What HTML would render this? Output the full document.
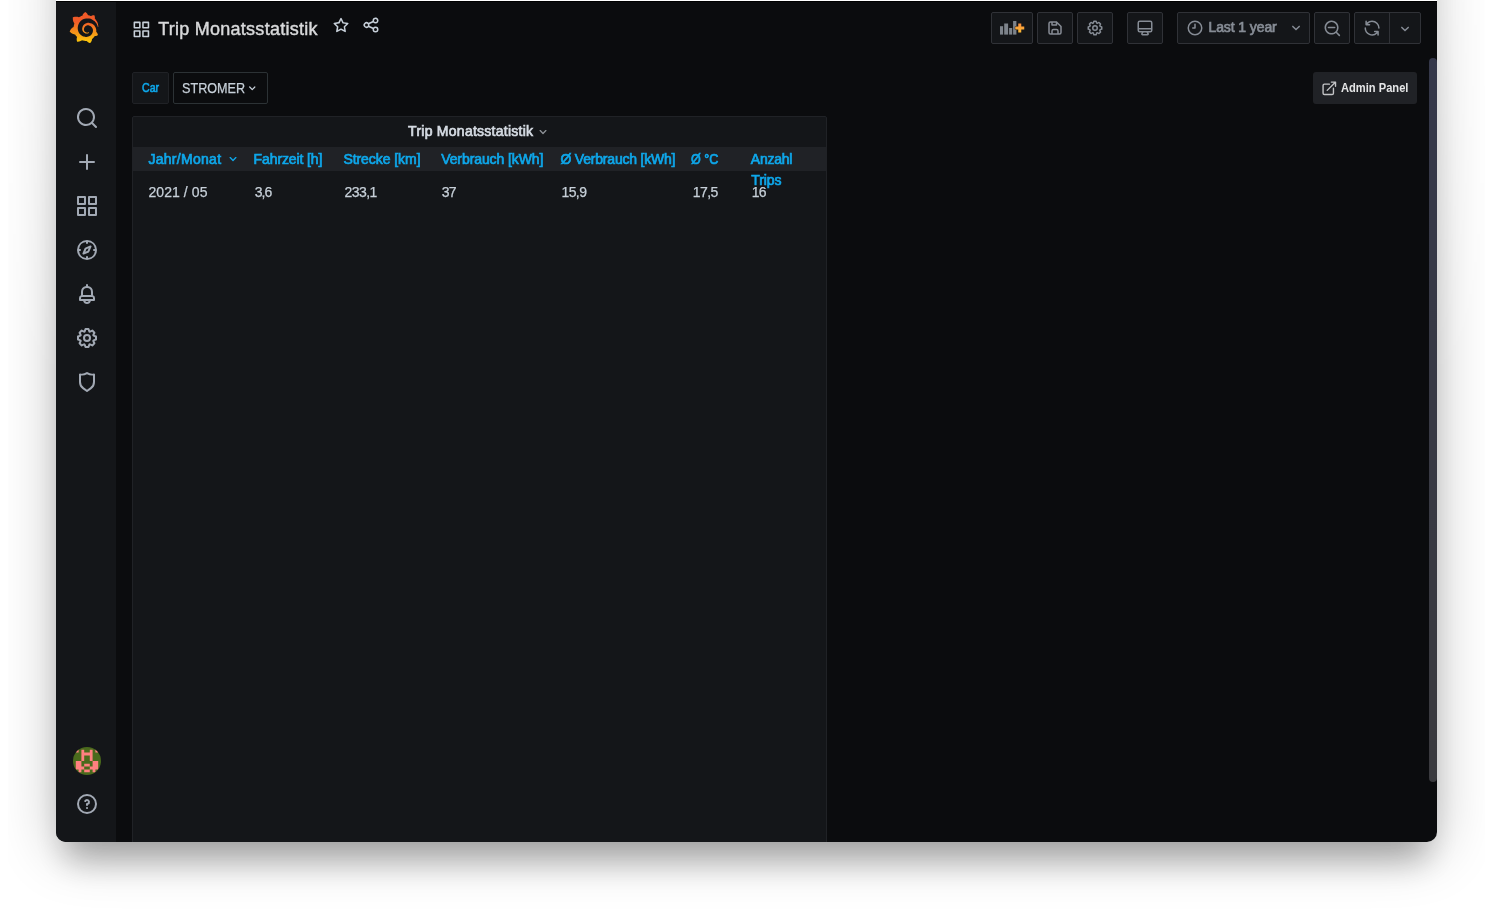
<!DOCTYPE html>
<html lang="en">
<head>
<meta charset="utf-8">
<title>Trip Monatsstatistik - Grafana</title>
<style>
*{box-sizing:border-box;margin:0;padding:0}
html,body{width:1492px;height:914px;overflow:hidden;background:#fff}
body{font-family:"Liberation Sans",sans-serif;position:relative;color:#c7d0d9}
.abs{position:absolute}
.shclip{position:absolute;left:8px;top:0;width:1477px;height:914px;overflow:hidden;-webkit-mask-image:linear-gradient(to bottom,rgba(0,0,0,.68) 0,#000 380px);mask-image:linear-gradient(to bottom,rgba(0,0,0,.68) 0,#000 380px)}
.shadow{position:absolute;left:48px;top:-120px;width:1381px;height:962px;border-radius:0 0 10px 10px;
  box-shadow:0 28px 30px -10px rgba(0,0,0,.25),0 8px 58px rgba(0,0,0,.245)}
.topstrip{position:absolute;left:56px;top:0;width:1381px;height:1px;background:#fff}
.win{position:absolute;left:56px;top:1px;width:1381px;height:841px;background:#0b0c0e;border-radius:0 0 10px 10px;overflow:hidden}
.win .topline{position:absolute;left:0;top:0;width:100%;height:1px;background:#000;z-index:9}
.side{position:absolute;left:0;top:0;width:60px;height:100%;background:#141619}
.side svg.ic{position:absolute;left:19px;width:24px;height:24px;fill:#a2a9b4}
.t{position:absolute;white-space:nowrap;line-height:1}
#main{position:absolute;left:0;top:0;width:100%;height:100%;will-change:transform}
</style>
</head>
<body>
<div class="shclip"><div class="shadow"></div></div>
<div class="topstrip"></div>
<div class="win">
  <div class="topline"></div>
  <div class="side" id="side">
    <svg class="abs" style="left:13px;top:10px;width:30px;height:33px" viewBox="0 0 351 365"><defs><linearGradient id="gl" gradientUnits="userSpaceOnUse" x1="175.5" y1="445.4948" x2="175.5" y2="114.0346"><stop offset="0" stop-color="#FFF100"/><stop offset="1" stop-color="#F05A28"/></linearGradient></defs><path fill="url(#gl)" d="M342,161.2c-0.600-6.100-1.600-13.100-3.600-20.900c-2-7.700-5-16.200-9.400-25c-4.400-8.800-10.100-17.900-17.500-26.800 c-2.900-3.500-6.100-6.900-9.500-10.200c5.100-20.300-6.200-37.900-6.200-37.900c-19.500-1.200-31.900,6.100-36.500,9.400c-0.800-0.300-1.500-0.700-2.300-1 c-3.300-1.300-6.700-2.600-10.300-3.700c-3.500-1.100-7.100-2.100-10.800-3c-3.700-0.900-7.400-1.600-11.200-2.200c-0.700-0.100-1.300-0.200-2-0.300 c-8.500-27.200-32.900-38.600-32.900-38.600c-27.300,17.300-32.400,41.500-32.400,41.500s-0.100,0.500-0.300,1.400c-1.500,0.400-3,0.900-4.500,1.300c-2.100,0.600-4.200,1.400-6.200,2.200 c-2.100,0.800-4.100,1.600-6.200,2.500c-4.100,1.800-8.200,3.800-12.200,6c-3.900,2.200-7.700,4.600-11.400,7.100c-0.500-0.200-1-0.400-1-0.400c-37.800-14.400-71.300,2.900-71.300,2.900 c-3.100,40.200,15.100,65.500,18.700,70.100c-0.900,2.500-1.700,5-2.500,7.500c-2.800,9.100-4.900,18.400-6.200,28.100c-0.200,1.400-0.400,2.800-0.500,4.200 C18.800,192.700,8.500,228,8.500,228c29.100,33.500,63.100,35.600,63.100,35.600c0,0,0.100-0.100,0.100-0.100c4.300,7.700,9.300,15,14.900,21.900c2.400,2.900,4.800,5.600,7.400,8.300 c-10.600,30.400,1.500,55.600,1.500,55.600c32.400,1.200,53.700-14.200,58.200-17.700c3.200,1.100,6.500,2.100,9.800,2.900c10,2.600,20.200,4.100,30.400,4.500 c2.500,0.100,5.100,0.200,7.600,0.100l1.200,0l0.800,0l1.600,0l1.600-0.100l0,0.100c15.300,21.800,42.100,24.900,42.100,24.900c19.100-20.100,20.200-40.100,20.200-44.400l0,0 c0,0,0-0.100,0-0.300c0-0.400,0-0.600,0-0.600l0,0c0-0.300,0-0.600,0-0.900c4-2.800,7.800-5.800,11.400-9.100c7.600-6.900,14.300-14.800,19.900-23.300 c0.500-0.800,1-1.600,1.500-2.400c21.600,1.200,36.900-13.400,36.900-13.400c-3.600-22.500-16.400-33.500-19.100-35.600l0,0c0,0-0.100-0.100-0.300-0.200 c-0.200-0.100-0.200-0.200-0.200-0.200c0,0,0,0,0,0c-0.100-0.100-0.300-0.200-0.500-0.300c0.100-1.400,0.200-2.700,0.300-4.100c0.200-2.400,0.200-4.900,0.200-7.300l0-1.800l0-0.900 l0-0.500c0-0.600,0-0.400,0-0.600l-0.100-1.500l-0.100-2c0-0.700-0.100-1.300-0.200-1.900c-0.100-0.600-0.100-1.300-0.200-1.900l-0.200-1.900l-0.300-1.900 c-0.400-2.500-0.800-4.900-1.400-7.400c-2.300-9.700-6.100-18.900-11-27.200c-5-8.300-11.200-15.600-18.300-21.800c-7-6.200-14.900-11.200-23.100-14.900 c-8.300-3.700-16.900-6.100-25.500-7.200c-4.300-0.600-8.600-0.800-12.900-0.700l-1.600,0l-0.400,0c-0.100,0-0.600,0-0.500,0l-0.700,0l-1.600,0.100 c-0.600,0-1.200,0.100-1.700,0.100c-2.200,0.200-4.400,0.500-6.500,0.900c-8.600,1.600-16.700,4.700-23.800,9c-7.100,4.300-13.300,9.600-18.300,15.600c-5,6-8.900,12.700-11.600,19.600 c-2.700,6.900-4.200,14.100-4.600,21c-0.100,1.700-0.100,3.500-0.100,5.200c0,0.400,0,0.900,0,1.300l0.100,1.400c0.100,0.800,0.100,1.700,0.200,2.500c0.300,3.500,1,6.900,1.900,10.100 c1.900,6.500,4.900,12.400,8.600,17.400c3.700,5,8.200,9.100,12.900,12.400c4.700,3.200,9.800,5.500,14.800,7c5,1.500,10,2.100,14.700,2.100c0.600,0,1.200,0,1.700,0 c0.300,0,0.600,0,0.900,0c0.300,0,0.600,0,0.900-0.100c0.500,0,1-0.100,1.500-0.100c0.100,0,0.300,0,0.400-0.100l0.500-0.100c0.300,0,0.600-0.100,0.900-0.100 c0.600-0.100,1.100-0.200,1.700-0.300c0.600-0.100,1.100-0.200,1.600-0.400c1.100-0.200,2.100-0.600,3.100-0.900c2-0.700,4-1.500,5.700-2.400c1.800-0.900,3.400-2,5-3 c0.400-0.300,0.900-0.600,1.300-1c1.600-1.300,1.900-3.700,0.600-5.300c-1.100-1.400-3.100-1.800-4.700-0.900c-0.400,0.200-0.800,0.400-1.200,0.600c-1.400,0.700-2.800,1.300-4.300,1.800 c-1.500,0.500-3.100,0.900-4.700,1.200c-0.800,0.100-1.600,0.200-2.500,0.300c-0.400,0-0.800,0.100-1.300,0.100c-0.400,0-0.900,0-1.200,0c-0.400,0-0.800,0-1.200,0 c-0.500,0-1,0-1.500-0.100c0,0-0.300,0-0.100,0l-0.200,0l-0.300,0c-0.200,0-0.500,0-0.700-0.100c-0.500-0.100-0.900-0.100-1.400-0.200c-3.700-0.500-7.400-1.600-10.900-3.200 c-3.600-1.600-7-3.800-10.100-6.600c-3.100-2.800-5.800-6.100-7.900-9.900c-2.100-3.800-3.600-8-4.300-12.400c-0.300-2.200-0.500-4.500-0.400-6.700c0-0.600,0.100-1.200,0.100-1.800 c0,0.200,0-0.100,0-0.100l0-0.200l0-0.500c0-0.300,0.100-0.600,0.100-0.900c0.100-1.200,0.300-2.400,0.500-3.600c1.700-9.600,6.500-19,13.900-26.100c1.900-1.800,3.900-3.400,6-4.900 c2.100-1.500,4.400-2.800,6.800-3.900c2.400-1.100,4.800-2,7.400-2.700c2.500-0.700,5.100-1.100,7.800-1.400c1.300-0.100,2.600-0.200,4-0.200c0.400,0,0.600,0,0.900,0l1.100,0l0.700,0 c0.300,0,0,0,0.100,0l0.300,0l1.100,0.100c2.900,0.200,5.700,0.600,8.500,1.300c5.600,1.200,11.100,3.300,16.200,6.100c10.200,5.700,18.900,14.500,24.200,25.100 c2.700,5.300,4.600,11,5.500,16.900c0.200,1.500,0.400,3,0.500,4.500l0.100,1.100l0.100,1.100c0,0.400,0,0.800,0,1.100c0,0.400,0,0.800,0,1.100l0,1l0,1.100 c0,0.700-0.100,1.900-0.100,2.600c-0.100,1.600-0.300,3.300-0.500,4.900c-0.200,1.600-0.500,3.200-0.800,4.800c-0.300,1.600-0.700,3.200-1.100,4.700c-0.800,3.100-1.800,6.200-3,9.300 c-2.400,6-5.600,11.800-9.400,17.100c-7.700,10.600-18.200,19.200-30.200,24.700c-6,2.700-12.300,4.700-18.800,5.700c-3.200,0.600-6.500,0.900-9.800,1l-0.600,0l-0.500,0l-1.100,0 l-1.600,0l-0.800,0c0.400,0-0.100,0-0.100,0l-0.300,0c-1.800,0-3.500-0.100-5.300-0.300c-7-0.500-13.900-1.800-20.700-3.700c-6.700-1.900-13.200-4.600-19.400-7.800 c-12.300-6.600-23.400-15.600-32-26.500c-4.300-5.400-8.100-11.300-11.200-17.400c-3.100-6.100-5.600-12.600-7.400-19.100c-1.800-6.600-2.900-13.300-3.400-20.100l-0.100-1.300l0-0.300 l0-0.300l0-0.600l0-1.100l0-0.300l0-0.400l0-0.800l0-1.600l0-0.300c0,0,0,0.100,0-0.100l0-0.600c0-0.800,0-1.700,0-2.500c0.100-3.300,0.400-6.800,0.800-10.200 c0.400-3.400,1-6.900,1.700-10.300c0.700-3.400,1.500-6.800,2.500-10.200c1.900-6.700,4.300-13.200,7.100-19.300c5.700-12.200,13.100-23.100,22-31.800c2.200-2.200,4.500-4.200,6.900-6.200 c2.400-1.900,4.900-3.700,7.500-5.400c2.500-1.700,5.200-3.200,7.900-4.600c1.300-0.700,2.700-1.400,4.100-2c0.700-0.300,1.400-0.600,2.100-0.900c0.700-0.300,1.400-0.600,2.100-0.900 c2.800-1.200,5.700-2.200,8.700-3.100c0.700-0.200,1.500-0.400,2.200-0.700c0.700-0.200,1.500-0.400,2.200-0.600c1.500-0.400,3-0.800,4.500-1.100c0.700-0.200,1.500-0.300,2.300-0.500 c0.800-0.200,1.500-0.300,2.300-0.500c0.800-0.100,1.500-0.300,2.300-0.400l1.100-0.200l1.200-0.200c0.800-0.100,1.500-0.200,2.300-0.300c0.900-0.100,1.700-0.200,2.600-0.300 c0.700-0.100,1.900-0.200,2.600-0.300c0.500-0.100,1.100-0.100,1.600-0.200l1.100-0.100l0.500-0.100l0.600,0c0.900-0.100,1.700-0.100,2.600-0.200l1.300-0.100c0,0,0.500,0,0.100,0l0.300,0 l0.600,0c0.700,0,1.500-0.100,2.200-0.100c2.900-0.100,5.900-0.100,8.800,0c5.800,0.200,11.500,0.900,17,1.900c11.100,2.100,21.500,5.600,31,10.300 c9.500,4.600,17.900,10.300,25.300,16.500c0.500,0.400,0.900,0.800,1.400,1.200c0.400,0.400,0.900,0.800,1.300,1.200c0.900,0.800,1.700,1.600,2.600,2.400c0.900,0.800,1.700,1.600,2.500,2.400 c0.800,0.800,1.600,1.600,2.400,2.500c3.100,3.300,6,6.600,8.600,10c5.200,6.700,9.400,13.500,12.700,19.900c0.200,0.400,0.400,0.800,0.600,1.200c0.200,0.400,0.400,0.800,0.600,1.200 c0.400,0.800,0.800,1.600,1.100,2.400c0.400,0.800,0.700,1.500,1.100,2.300c0.300,0.800,0.700,1.500,1,2.300c1.200,3,2.400,5.900,3.300,8.600c1.500,4.400,2.600,8.300,3.500,11.700 c0.300,1.400,1.600,2.300,3,2.100c1.500-0.100,2.600-1.300,2.600-2.800C342.600,170.400,342.500,166.100,342,161.200z"/></svg>
    <svg class="ic" style="top:105px" viewBox="0 0 24 24"><path d="M21.71,20.29,18,16.61A9,9,0,1,0,16.61,18l3.68,3.68a1,1,0,0,0,1.420,0A1,1,0,0,0,21.71,20.29ZM11,18a7,7,0,1,1,7-7A7,7,0,0,1,11,18Z"/></svg>
    <svg class="ic" style="top:149px" viewBox="0 0 24 24"><path d="M19,11H13V5a1,1,0,0,0-2,0v6H5a1,1,0,0,0,0,2h6v6a1,1,0,0,0,2,0V13h6a1,1,0,0,0,0-2Z"/></svg>
    <svg class="ic" style="top:193px" viewBox="0 0 24 24"><path d="M10,13H3a1,1,0,0,0-1,1v7a1,1,0,0,0,1,1h7a1,1,0,0,0,1-1V14A1,1,0,0,0,10,13ZM9,20H4V15H9ZM21,2H14a1,1,0,0,0-1,1v7a1,1,0,0,0,1,1h7a1,1,0,0,0,1-1V3A1,1,0,0,0,21,2ZM20,9H15V4h5Zm1,4H14a1,1,0,0,0-1,1v7a1,1,0,0,0,1,1h7a1,1,0,0,0,1-1V14A1,1,0,0,0,21,13Zm-1,7H15V15h5ZM10,2H3A1,1,0,0,0,2,3v7a1,1,0,0,0,1,1h7a1,1,0,0,0,1-1V3A1,1,0,0,0,10,2ZM9,9H4V4H9Z"/></svg>
    <svg class="ic" style="top:237px" viewBox="0 0 24 24"><path d="M12,2A10,10,0,1,0,22,12,10,10,0,0,0,12,2Zm1,17.930V19a1,1,0,0,0-2,0v.93A8,8,0,0,1,4.070,13H5a1,1,0,0,0,0-2H4.070A8,8,0,0,1,11,4.070V5a1,1,0,0,0,2,0V4.070A8,8,0,0,1,19.930,11H19a1,1,0,0,0,0,2h.93A8,8,0,0,1,13,19.930ZM15.140,7.550l-5,2.120a1,1,0,0,0-.520.520l-2.120,5a1,1,0,0,0,.21,1.100,1,1,0,0,0,.7.300.930.930,0,0,0,.4-.09l5-2.120a1,1,0,0,0,.52-.52l2.120-5a1,1,0,0,0-1.310-1.310Zm-2.490,5.100-2.280,1,1-2.280,2.280-1Z"/></svg>
    <svg class="ic" style="top:281px" viewBox="0 0 24 24"><path d="M18,13.180V10a6,6,0,0,0-5-5.910V3a1,1,0,0,0-2,0V4.090A6,6,0,0,0,6,10v3.180A3,3,0,0,0,4,16v2a1,1,0,0,0,1,1H8.140a4,4,0,0,0,7.720,0H19a1,1,0,0,0,1-1V16A3,3,0,0,0,18,13.180ZM8,10a4,4,0,0,1,8,0v3H8Zm4,10a2,2,0,0,1-1.720-1h3.440A2,2,0,0,1,12,20Zm6-3H6V16a1,1,0,0,1,1-1H17a1,1,0,0,1,1,1Z"/></svg>
    <svg class="ic" style="top:325px" viewBox="0 0 24 24"><path d="M21.320,9.550l-1.890-.63.890-1.780A1,1,0,0,0,20.130,6L18,3.870a1,1,0,0,0-1.150-.19l-1.780.89-.63-1.890A1,1,0,0,0,13.500,2h-3a1,1,0,0,0-.95.680L8.920,4.570,7.140,3.680A1,1,0,0,0,6,3.870L3.870,6a1,1,0,0,0-.19,1.150l.89,1.780-1.890.63A1,1,0,0,0,2,10.500v3a1,1,0,0,0,.68.950l1.890.63-.89,1.780A1,1,0,0,0,3.870,18L6,20.130a1,1,0,0,0,1.150.19l1.780-.89.630,1.890a1,1,0,0,0,.95.680h3a1,1,0,0,0,.95-.68l.63-1.890,1.780.89A1,1,0,0,0,18,20.130L20.130,18a1,1,0,0,0,.19-1.150l-.89-1.780,1.890-.63A1,1,0,0,0,22,13.500v-3A1,1,0,0,0,21.320,9.550ZM20,12.780l-1.200.4A2,2,0,0,0,17.640,16l.57,1.140-1.100,1.100L16,17.640a2,2,0,0,0-2.790,1.160l-.4,1.200H11.220l-.4-1.200A2,2,0,0,0,8,17.640l-1.140.57-1.100-1.100L6.360,16A2,2,0,0,0,5.200,13.180L4,12.780V11.220l1.200-.4A2,2,0,0,0,6.360,8L5.790,6.890l1.100-1.100L8,6.360A2,2,0,0,0,10.820,5.200l.4-1.200h1.560l.4,1.200A2,2,0,0,0,16,6.360l1.140-.57,1.100,1.100L17.640,8a2,2,0,0,0,1.160,2.790l1.200.4ZM12,8a4,4,0,1,0,4,4A4,4,0,0,0,12,8Zm0,6a2,2,0,1,1,2-2A2,2,0,0,1,12,14Z"/></svg>
    <svg class="ic" style="top:369px" viewBox="0 0 24 24"><path d="M19.630,3.650a1,1,0,0,0-.84-.2,8,8,0,0,1-6.220-1.270,1,1,0,0,0-1.140,0A8,8,0,0,1,5.210,3.450a1,1,0,0,0-.84.2A1,1,0,0,0,4,4.430v7.450a9,9,0,0,0,3.770,7.330l3.650,2.600a1,1,0,0,0,1.160,0l3.650-2.600A9,9,0,0,0,20,11.880V4.430A1,1,0,0,0,19.630,3.650ZM18,11.880a7,7,0,0,1-2.930,5.700L12,19.770,8.930,17.580A7,7,0,0,1,6,11.880V5.580a10,10,0,0,0,6-1.390,10,10,0,0,0,6,1.390Z"/></svg>
    <svg class="abs" style="left:17px;top:746px;width:28px;height:28px" viewBox="0 0 10 10"><defs><clipPath id="av"><circle cx="5" cy="5" r="5"/></clipPath></defs><g clip-path="url(#av)"><rect width="10" height="10" fill="#4a6a1c"/><path fill="#ff8080" d="M1,1h1v1h-1zM3,1h1v1h-1zM6,1h1v1h-1zM8,1h1v1h-1zM3,2h4v1h-4zM3,3h1v2h-1zM6,3h1v2h-1zM1,5h2v2h-2zM7,5h2v2h-2zM4,6h2v1h-2zM1,7h3v1h-3zM6,7h3v1h-3zM2,8h1v1h-1zM4,8h2v1h-2zM7,8h1v1h-1z"/></g></svg>
    <svg class="ic" style="top:791px" viewBox="0 0 24 24"><path d="M11.290,15.290a1.580,1.580,0,0,0-.12.150.76.76,0,0,0-.09.180.64.640,0,0,0-.06.180,1.360,1.360,0,0,0,0,.2.840.84,0,0,0,.08.380.9.900,0,0,0,.54.540.94.940,0,0,0,.76,0,.9.900,0,0,0,.54-.54A1,1,0,0,0,13,16a1,1,0,0,0-.29-.71A1,1,0,0,0,11.290,15.290ZM12,2A10,10,0,1,0,22,12,10,10,0,0,0,12,2Zm0,18a8,8,0,1,1,8-8A8,8,0,0,1,12,20ZM12,7A3,3,0,0,0,9.400,8.500a1,1,0,1,0,1.730,1A1,1,0,0,1,12,9a1,1,0,0,1,0,2,1,1,0,0,0-1,1v1a1,1,0,0,0,2,0v-.18A3,3,0,0,0,12,7Z"/></svg>
  </div>
  <div id="main">
<svg class="abs" style="left:75.90px;top:18.60px;width:18.8px;height:18.8px;fill:#c7d0d9" viewBox="0 0 24 24"><path d="M10,13H3a1,1,0,0,0-1,1v7a1,1,0,0,0,1,1h7a1,1,0,0,0,1-1V14A1,1,0,0,0,10,13ZM9,20H4V15H9ZM21,2H14a1,1,0,0,0-1,1v7a1,1,0,0,0,1,1h7a1,1,0,0,0,1-1V3A1,1,0,0,0,21,2ZM20,9H15V4h5Zm1,4H14a1,1,0,0,0-1,1v7a1,1,0,0,0,1,1h7a1,1,0,0,0,1-1V14A1,1,0,0,0,21,13Zm-1,7H15V15h5ZM10,2H3A1,1,0,0,0,2,3v7a1,1,0,0,0,1,1h7a1,1,0,0,0,1-1V3A1,1,0,0,0,10,2ZM9,9H4V4H9Z"/></svg>
<span class="t" style="top:18.56px;font-size:18px;color:#d8d9da;left:102.20px;letter-spacing:0.257px;-webkit-text-stroke:0.45px #d8d9da;">Trip Monatsstatistik</span>
<svg class="abs" style="left:275.60px;top:15.00px;width:18px;height:18px;fill:#c7d0d9" viewBox="0 0 24 24"><path d="M22,9.67A1,1,0,0,0,21.14,9l-5.69-.83L12.9,3a1,1,0,0,0-1.8,0L8.55,8.16,2.86,9a1,1,0,0,0-.81.68,1,1,0,0,0,.25,1l4.13,4-1,5.68A1,1,0,0,0,6.900,21.440L12,18.770l5.100,2.670a.93.93,0,0,0,.46.120,1,1,0,0,0,.59-.19,1,1,0,0,0,.4-1l-1-5.68,4.130-4A1,1,0,0,0,22,9.670Zm-6.150,4a1,1,0,0,0-.29.880l.72,4.200-3.760-2a1.060,1.060,0,0,0-.94,0l-3.760,2,.72-4.200a1,1,0,0,0-.29-.88l-3-3,4.210-.61a1,1,0,0,0,.76-.55L12,5.700l1.880,3.820a1,1,0,0,0,.76.550l4.210.61Z"/></svg>
<svg class="abs" style="left:306.30px;top:15.00px;width:18px;height:18px;fill:#c7d0d9" viewBox="0 0 24 24"><path d="M18,14a4,4,0,0,0-3.080,1.480l-5.100-2.350a3.640,3.640,0,0,0,0-2.260l5.100-2.350A4,4,0,1,0,14,6a4.170,4.170,0,0,0,.07.710L8.790,9.140a4,4,0,1,0,0,5.720l5.280,2.430A4.170,4.170,0,0,0,14,18a4,4,0,1,0,4-4ZM18,4a2,2,0,1,1-2,2A2,2,0,0,1,18,4ZM6,14a2,2,0,1,1,2-2A2,2,0,0,1,6,14Zm12,6a2,2,0,1,1,2-2A2,2,0,0,1,18,20Z"/></svg>
<div class="abs" style="left:935px;top:11px;width:42px;height:32px;background:#141619;border:1px solid #303237;border-radius:2px;"></div>
<svg class="abs" style="left:943.9px;top:20.0px;width:25px;height:14px" viewBox="0 0 25 14"><defs><linearGradient id="pg" x1="0" y1="0" x2="0" y2="1"><stop offset="0" stop-color="#f78d3d"/><stop offset="1" stop-color="#fcbb32"/></linearGradient></defs><g fill="#7d838b"><rect x="0" y="5.2" width="3.1" height="8.4"/><rect x="4.2" y="2.5" width="3.9" height="11.100"/><rect x="9.1" y="7" width="3.1" height="6.6"/><rect x="13.1" y="0" width="3.3" height="13.6"/></g><path fill="url(#pg)" d="M18.25,2.5h3v3h3v3h-3v3h-3v-3h-3v-3h3z" stroke="#141619" stroke-width="1" paint-order="stroke"/></svg>
<div class="abs" style="left:981px;top:11px;width:36px;height:32px;background:#141619;border:1px solid #303237;border-radius:2px;"></div>
<svg class="abs" style="left:990.20px;top:18.00px;width:18px;height:18px;fill:#868c95" viewBox="0 0 24 24"><path d="M20.71,9.29l-6-6a1,1,0,0,0-.32-.21A1.090,1.090,0,0,0,14,3H6A3,3,0,0,0,3,6V18a3,3,0,0,0,3,3H18a3,3,0,0,0,3-3V10A1,1,0,0,0,20.710,9.290ZM9,5h4V7H9Zm6,14H9V16a1,1,0,0,1,1-1h4a1,1,0,0,1,1,1Zm4-1a1,1,0,0,1-1,1H17V16a3,3,0,0,0-3-3H10a3,3,0,0,0-3,3v3H6a1,1,0,0,1-1-1V6A1,1,0,0,1,6,5H7V8A1,1,0,0,0,8,9h6a1,1,0,0,0,1-1V6.410l4,4Z"/></svg>
<div class="abs" style="left:1021px;top:11px;width:36px;height:32px;background:#141619;border:1px solid #303237;border-radius:2px;"></div>
<svg class="abs" style="left:1030.00px;top:18.00px;width:18px;height:18px;fill:#868c95" viewBox="0 0 24 24"><path d="M21.320,9.550l-1.890-.63.890-1.780A1,1,0,0,0,20.130,6L18,3.870a1,1,0,0,0-1.150-.19l-1.780.89-.63-1.890A1,1,0,0,0,13.500,2h-3a1,1,0,0,0-.95.68L8.920,4.570,7.140,3.680A1,1,0,0,0,6,3.870L3.870,6a1,1,0,0,0-.19,1.150l.89,1.780-1.890.63A1,1,0,0,0,2,10.500v3a1,1,0,0,0,.68.950l1.890.63-.89,1.780A1,1,0,0,0,3.870,18L6,20.130a1,1,0,0,0,1.150.19l1.780-.89.630,1.890a1,1,0,0,0,.95.680h3a1,1,0,0,0,.95-.68l.63-1.890,1.780.89A1,1,0,0,0,18,20.130L20.130,18a1,1,0,0,0,.19-1.150l-.89-1.780,1.890-.63A1,1,0,0,0,22,13.500v-3A1,1,0,0,0,21.320,9.550ZM20,12.780l-1.200.4A2,2,0,0,0,17.640,16l.57,1.140-1.100,1.100L16,17.640a2,2,0,0,0-2.790,1.160l-.4,1.200H11.220l-.4-1.200A2,2,0,0,0,8,17.640l-1.140.57-1.100-1.100L6.360,16A2,2,0,0,0,5.200,13.180L4,12.780V11.220l1.200-.4A2,2,0,0,0,6.360,8L5.790,6.890l1.100-1.100L8,6.360A2,2,0,0,0,10.820,5.200l.4-1.200h1.560l.4,1.200A2,2,0,0,0,16,6.360l1.140-.57,1.100,1.100L17.640,8a2,2,0,0,0,1.160,2.790l1.200.4ZM12,8a4,4,0,1,0,4,4A4,4,0,0,0,12,8Zm0,6a2,2,0,1,1,2-2A2,2,0,0,1,12,14Z"/></svg>
<div class="abs" style="left:1071px;top:11px;width:36px;height:32px;background:#141619;border:1px solid #303237;border-radius:2px;"></div>
<svg class="abs" style="left:1080.00px;top:17.80px;width:18px;height:18px;fill:#868c95" viewBox="0 0 24 24"><path d="M19,2H5A3,3,0,0,0,2,5V15a3,3,0,0,0,3,3H7.640l-.58,1a2,2,0,0,0,0,2,2,2,0,0,0,1.750,1h6.460A2,2,0,0,0,17,21a2,2,0,0,0,0-2l-.59-1H19a3,3,0,0,0,3-3V5A3,3,0,0,0,19,2ZM8.770,20,10,18H14l1.200,2ZM20,15a1,1,0,0,1-1,1H5a1,1,0,0,1-1-1V14H20Zm0-3H4V5A1,1,0,0,1,5,4H19a1,1,0,0,1,1,1Z"/></svg>
<div class="abs" style="left:1121px;top:11px;width:133px;height:32px;background:#141619;border:1px solid #303237;border-radius:2px;"></div>
<svg class="abs" style="left:1130.40px;top:17.60px;width:18px;height:18px;fill:#868c95" viewBox="0 0 24 24"><path d="M12,2A10,10,0,1,0,22,12,10.010,10.010,0,0,0,12,2Zm0,18a8,8,0,1,1,8-8A8.009,8.009,0,0,1,12,20ZM12,6a1,1,0,0,0-1,1v4H9a1,1,0,0,0,0,2h3a1,1,0,0,0,1-1V7A1,1,0,0,0,12,6Z"/></svg>
<span class="t" style="top:19.25px;font-size:14px;color:#868c95;left:1152.50px;letter-spacing:-0.100px;-webkit-text-stroke:0.7px #868c95;">Last 1 year</span>
<svg class="abs" style="left:1231.00px;top:18.10px;width:18px;height:18px;fill:#868c95" viewBox="0 0 24 24"><path d="M17,9.17a1,1,0,0,0-1.410,0L12,12.710,8.460,9.170a1,1,0,0,0-1.410,0,1,1,0,0,0,0,1.420l4.240,4.240a1,1,0,0,0,1.420,0L17,10.590A1,1,0,0,0,17,9.170Z"/></svg>
<div class="abs" style="left:1258px;top:11px;width:36px;height:32px;background:#141619;border:1px solid #303237;border-radius:2px;"></div>
<svg class="abs" style="left:1267.05px;top:17.75px;width:18.7px;height:18.7px;fill:#868c95" viewBox="0 0 24 24"><path d="M21.71,20.29,18,16.61A9,9,0,1,0,16.610,18l3.680,3.680a1,1,0,0,0,1.420,0A1,1,0,0,0,21.710,20.290ZM11,18a7,7,0,1,1,7-7A7,7,0,0,1,11,18ZM15,10H7a1,1,0,0,0,0,2h8a1,1,0,0,0,0-2Z"/></svg>
<div class="abs" style="left:1298px;top:11px;width:67px;height:32px;background:#141619;border:1px solid #303237;border-radius:2px;"></div>
<svg class="abs" style="left:1306.90px;top:17.70px;width:18.2px;height:18.2px;fill:#868c95" viewBox="0 0 24 24"><path d="M19.91,15.51H15.38a1,1,0,0,0,0,2h2.4A8,8,0,0,1,4,12a1,1,0,0,0-2,0,10,10,0,0,0,16.88,7.23V21a1,1,0,0,0,2,0V16.5A1,1,0,0,0,19.91,15.51ZM12,2A10,10,0,0,0,5.12,4.77V3a1,1,0,0,0-2,0V7.5a1,1,0,0,0,1,1h4.5a1,1,0,0,0,0-2H6.22A8,8,0,0,1,20,12a1,1,0,0,0,2,0A10,10,0,0,0,12,2Z"/></svg>
<div class="abs" style="left:1333px;top:11px;width:1px;height:32px;background:#303237"></div>
<svg class="abs" style="left:1340.10px;top:18.80px;width:18px;height:18px;fill:#868c95" viewBox="0 0 24 24"><path d="M17,9.17a1,1,0,0,0-1.410,0L12,12.710,8.460,9.170a1,1,0,0,0-1.410,0,1,1,0,0,0,0,1.420l4.240,4.240a1,1,0,0,0,1.420,0L17,10.590A1,1,0,0,0,17,9.170Z"/></svg>
<div class="abs" style="left:76px;top:71px;width:37px;height:32px;background:#141619;border:1px solid #202226;border-radius:2px;"></div>
<span class="t" style="top:80.84px;font-size:12px;color:#0ea7ea;left:85.90px;transform:scaleX(0.8851);transform-origin:0 0;-webkit-text-stroke:0.6px #0ea7ea;">Car</span>
<div class="abs" style="left:117px;top:71px;width:95px;height:32px;background:#0b0c0e;border:1px solid #2c3235;border-radius:2px;"></div>
<span class="t" style="top:79.95px;font-size:14px;color:#c7d0d9;left:125.80px;transform:scaleX(0.9014);transform-origin:0 0;-webkit-text-stroke:0.25px #c7d0d9;">STROMER</span>
<svg class="abs" style="left:188.95px;top:79.95px;width:14.5px;height:14.5px;fill:#c7d0d9" viewBox="0 0 24 24"><path d="M17,9.17a1,1,0,0,0-1.410,0L12,12.710,8.460,9.170a1,1,0,0,0-1.410,0,1,1,0,0,0,0,1.420l4.240,4.240a1,1,0,0,0,1.420,0L17,10.590A1,1,0,0,0,17,9.170Z"/></svg>
<div class="abs" style="left:1257px;top:71px;width:104px;height:32px;background:#202226;border-radius:3px;"></div>
<svg class="abs" style="left:1264.70px;top:78.60px;width:16.6px;height:16.6px;fill:#c4c5c7" viewBox="0 0 24 24"><path d="M18,10.820a1,1,0,0,0-1,1V19a1,1,0,0,1-1,1H5a1,1,0,0,1-1-1V8A1,1,0,0,1,5,7h7.180a1,1,0,0,0,0-2H5A3,3,0,0,0,2,8V19a3,3,0,0,0,3,3H16a3,3,0,0,0,3-3V11.820A1,1,0,0,0,18,10.820Zm3.920-8.200a1,1,0,0,0-.54-.54A1,1,0,0,0,21,2H15a1,1,0,0,0,0,2h3.590L8.290,14.290a1,1,0,0,0,0,1.420,1,1,0,0,0,1.420,0L20,5.410V9a1,1,0,0,0,2,0V3A1,1,0,0,0,21.920,2.620Z"/></svg>
<span class="t" style="top:80.64px;font-size:12px;color:#e4e5e6;left:1284.80px;transform:scaleX(0.9282);transform-origin:0 0;font-weight:bold;">Admin Panel</span>
<div class="abs" style="left:76px;top:115px;width:695px;height:760px;background:#141619;border:1px solid #202226;border-radius:2px"></div>
<span class="t" style="top:123.35px;font-size:14px;color:#d5dbe3;left:352.10px;letter-spacing:0.260px;-webkit-text-stroke:0.7px #d5dbe3;">Trip Monatsstatistik</span>
<svg class="abs" style="left:479.30px;top:123.40px;width:16px;height:16px;fill:#8e9297" viewBox="0 0 24 24"><path d="M17,9.17a1,1,0,0,0-1.410,0L12,12.710,8.460,9.170a1,1,0,0,0-1.410,0,1,1,0,0,0,0,1.420l4.240,4.240a1,1,0,0,0,1.420,0L17,10.590A1,1,0,0,0,17,9.170Z"/></svg>
<div class="abs" style="left:77px;top:146px;width:693px;height:24px;background:#202226"></div>
<span class="t" style="top:151.15px;font-size:14px;color:#0ea7ea;left:92.40px;letter-spacing:0.289px;-webkit-text-stroke:0.7px #0ea7ea;">Jahr/Monat</span>
<span class="t" style="top:151.15px;font-size:14px;color:#0ea7ea;left:197.60px;letter-spacing:-0.109px;-webkit-text-stroke:0.7px #0ea7ea;">Fahrzeit [h]</span>
<span class="t" style="top:151.15px;font-size:14px;color:#0ea7ea;left:287.40px;letter-spacing:-0.058px;-webkit-text-stroke:0.7px #0ea7ea;">Strecke [km]</span>
<span class="t" style="top:151.15px;font-size:14px;color:#0ea7ea;left:385.20px;letter-spacing:-0.090px;-webkit-text-stroke:0.7px #0ea7ea;">Verbrauch [kWh]</span>
<span class="t" style="top:151.15px;font-size:14px;color:#0ea7ea;left:504.50px;letter-spacing:-0.206px;-webkit-text-stroke:0.7px #0ea7ea;">Ø Verbrauch [kWh]</span>
<span class="t" style="top:151.15px;font-size:14px;color:#0ea7ea;left:635.20px;transform:scaleX(0.8978);transform-origin:0 0;-webkit-text-stroke:0.7px #0ea7ea;">Ø °C</span>
<span class="t" style="top:150.85px;font-size:14px;color:#0ea7ea;left:694.80px;letter-spacing:-0.248px;-webkit-text-stroke:0.7px #0ea7ea;">Anzahl</span>
<span class="t" style="top:171.85px;font-size:14px;color:#0ea7ea;left:695.20px;letter-spacing:-0.040px;-webkit-text-stroke:0.7px #0ea7ea;">Trips</span>
<svg class="abs" style="left:169.20px;top:149.50px;width:16px;height:16px;fill:#0ea7ea" viewBox="0 0 24 24"><path d="M17,9.17a1,1,0,0,0-1.410,0L12,12.710,8.460,9.170a1,1,0,0,0-1.410,0,1,1,0,0,0,0,1.420l4.240,4.240a1,1,0,0,0,1.420,0L17,10.590A1,1,0,0,0,17,9.170Z"/></svg>
<span class="t" style="top:184.05px;font-size:14px;color:#c7d0d9;left:92.40px;letter-spacing:0.090px;-webkit-text-stroke:0.25px #c7d0d9;">2021 / 05</span>
<span class="t" style="top:184.05px;font-size:14px;color:#c7d0d9;left:198.80px;letter-spacing:-1.030px;-webkit-text-stroke:0.25px #c7d0d9;">3,6</span>
<span class="t" style="top:184.05px;font-size:14px;color:#c7d0d9;left:288.60px;letter-spacing:-0.600px;-webkit-text-stroke:0.25px #c7d0d9;">233,1</span>
<span class="t" style="top:184.05px;font-size:14px;color:#c7d0d9;left:385.70px;letter-spacing:-0.740px;-webkit-text-stroke:0.25px #c7d0d9;">37</span>
<span class="t" style="top:184.05px;font-size:14px;color:#c7d0d9;left:505.50px;letter-spacing:-0.600px;-webkit-text-stroke:0.25px #c7d0d9;">15,9</span>
<span class="t" style="top:184.05px;font-size:14px;color:#c7d0d9;left:636.80px;letter-spacing:-0.600px;-webkit-text-stroke:0.25px #c7d0d9;">17,5</span>
<span class="t" style="top:184.05px;font-size:14px;color:#c7d0d9;left:695.80px;letter-spacing:-0.740px;-webkit-text-stroke:0.25px #c7d0d9;">16</span>
<div class="abs" style="left:1373px;top:57px;width:8px;height:724px;border-radius:4px;background:linear-gradient(#35384a,#3a3a3e)"></div>
</div><!--/main-->
</div>
</body>
</html>
